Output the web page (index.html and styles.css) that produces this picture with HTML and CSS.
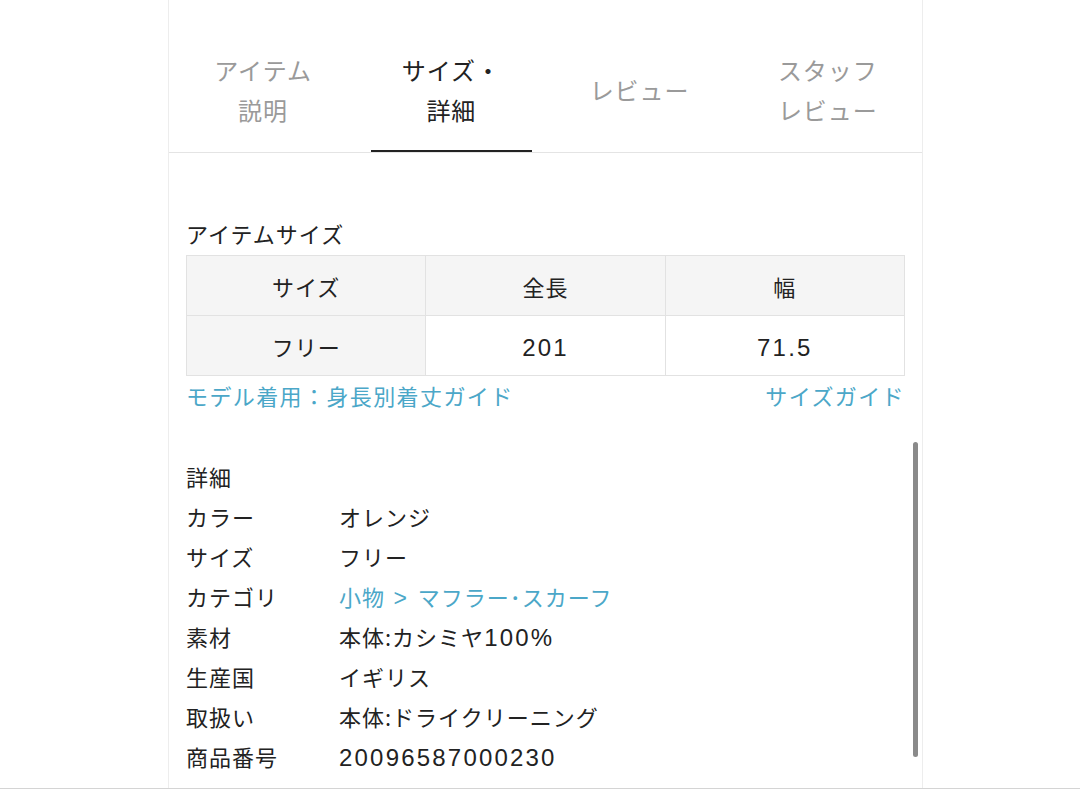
FILE: index.html
```html
<!DOCTYPE html>
<html lang="ja">
<head>
<meta charset="utf-8">
<link rel="stylesheet" href="styles.css">
</head>
<body>
<div class="page">
  <div class="panel">
    <nav class="tabs">
      <div class="tab"><span>アイテム<br>説明</span></div>
      <div class="tab active"><span>サイズ・<br>詳細</span></div>
      <div class="tab"><span>レビュー</span></div>
      <div class="tab"><span>スタッフ<br>レビュー</span></div>
    </nav>
    <section class="content">
      <h2 class="heading">アイテムサイズ</h2>
      <table class="size-table">
        <tr><th>サイズ</th><th>全長</th><th>幅</th></tr>
        <tr><th>フリー</th><td><span class="num">201</span></td><td><span class="num">71.5</span></td></tr>
      </table>
      <div class="links">
        <span class="link">モデル着用：身長別着丈ガイド</span>
        <span class="link">サイズガイド</span>
      </div>
      <h2 class="heading detail-heading">詳細</h2>
      <dl class="details">
        <dt>カラー</dt><dd>オレンジ</dd>
        <dt>サイズ</dt><dd>フリー</dd>
        <dt>カテゴリ</dt><dd class="link">小物<span class="gt"> &gt; </span>マフラー･スカーフ</dd>
        <dt>素材</dt><dd>本体:カシミヤ<span class="num">100%</span></dd>
        <dt>生産国</dt><dd>イギリス</dd>
        <dt>取扱い</dt><dd>本体:ドライクリーニング</dd>
        <dt>商品番号</dt><dd><span class="num">20096587000230</span></dd>
      </dl>
    </section>
    <div class="scrollbar"></div>
  </div>
</div>
</body>
</html>
```

FILE: styles.css
```css
* { box-sizing: border-box; }
html, body { margin: 0; padding: 0; background: #fff; }
body {
  font-family: "Noto Sans CJK JP", "Noto Sans", sans-serif;
  color: #222;
  overflow: hidden;
}
.page {
  height: 789px;
  border-bottom: 1px solid #d4d4d4;
}
.panel {
  position: relative;
  margin-left: 168px;
  width: 755px;
  height: 100%;
  border-left: 1px solid #ededed;
  border-right: 1px solid #ededed;
}
.tabs {
  display: grid;
  grid-template-columns: repeat(4, 1fr);
  border-bottom: 1px solid #e4e4e4;
}
.tab {
  height: 152px;
  padding-top: 30px;
  margin: 0 14px;
  display: flex;
  align-items: center;
  justify-content: center;
  text-align: center;
  font-size: 24px;
  line-height: 40px;
  letter-spacing: 1px;
  color: #9a9a9a;
  border-bottom: 2px solid transparent;
}
.tab.active {
  color: #222;
  border-bottom-color: #222;
}
.content {
  padding: 0 17px 0 17px;
}
.heading {
  margin: 65px 0 7px;
  font-size: 22px;
  font-weight: 400;
  line-height: 30px;
  letter-spacing: 1px;
}
.size-table {
  width: 100%;
  border-collapse: collapse;
  table-layout: fixed;
  font-size: 22px;
  letter-spacing: 1px;
}
.size-table th, .size-table td {
  height: 60px;
  border: 1px solid #e2e2e2;
  text-align: center;
  font-weight: 400;
  padding: 0;
}
.size-table th { background: #f5f5f5; }
.num, .gt {
  font-family: "Liberation Sans", "Noto Sans", sans-serif;
  font-size: 24px;
  line-height: 1;
  letter-spacing: 2.2px;
}
.gt { font-size: 23px; }
.links {
  display: flex;
  justify-content: space-between;
  margin-top: 4px;
  font-size: 22px;
  line-height: 30px;
  letter-spacing: 1.4px;
}
.link { color: #4ba7c8; }
.detail-heading {
  margin: 46px 0 0;
  line-height: 40px;
}
.details {
  margin: 0;
  display: grid;
  grid-template-columns: 153px 1fr;
  grid-auto-rows: 40px;
  font-size: 22px;
  line-height: 40px;
  letter-spacing: 1px;
}
.details dt, .details dd { margin: 0; height: 40px; }
.scrollbar {
  position: absolute;
  left: 744px;
  top: 442px;
  width: 5px;
  height: 315px;
  border-radius: 3px;
  background: #8a8a8a;
}
```
